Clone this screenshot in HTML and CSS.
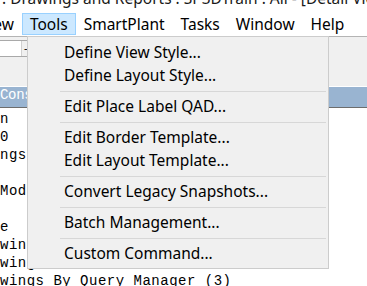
FILE: index.html
```html
<!DOCTYPE html>
<html lang="en">
  <head>
    <meta charset="UTF-8" />
    <title>Drawings and Reports : SP3DTrain : All</title>
    <link rel="stylesheet" href="styles.css">
  </head>
  <body>
    <div class="window">
      <div class="titlebar">
        <span class="title">: Drawings and Reports : SP3DTrain : All - [Detail View]</span>
      </div>

      <div class="menubar">
        <span class="menu-item first">View</span>
        <span class="menu-item active">Tools</span>
        <span class="menu-item">SmartPlant</span>
        <span class="menu-item">Tasks</span>
        <span class="menu-item">Window</span>
        <span class="menu-item">Help</span>
      </div>

      <div class="workspace">
        <div class="toolbar">
          <div class="combo">
            <span class="combo-text"></span>
            <span class="combo-btn">-</span>
          </div>
        </div>
        <div class="list-header">Cons</div>
        <ul class="tree">
          <li>n</li>
          <li>0</li>
          <li>ngs</li>
          <li>&nbsp;</li>
          <li>Mode</li>
          <li>&nbsp;</li>
          <li>e</li>
          <li>wing</li>
          <li>wing</li>
          <li>wings By Query Manager (3)</li>
        </ul>
      </div>

      <div class="dropdown">
        <div class="dd-item">Define View Style...</div>
        <div class="dd-item">Define Layout Style...</div>
        <div class="dd-sep"></div>
        <div class="dd-item">Edit Place Label QAD...</div>
        <div class="dd-sep"></div>
        <div class="dd-item">Edit Border Template...</div>
        <div class="dd-item">Edit Layout Template...</div>
        <div class="dd-sep"></div>
        <div class="dd-item">Convert Legacy Snapshots...</div>
        <div class="dd-sep"></div>
        <div class="dd-item">Batch Management...</div>
        <div class="dd-sep"></div>
        <div class="dd-item">Custom Command...</div>
      </div>
    </div>
  </body>
</html>
```

FILE: styles.css
```css
:root {
  --menu-bg: #f0f0f0;
  --menu-border: #cccccc;
  --sep-color: #d7d7d7;
  --hover-bg: #cce8ff;
  --hover-border: #99d1ff;
  --header-bg: #99b4d1;
  --text-color: #000;
}

* {
  box-sizing: border-box;
}

body {
  margin: 0;
  background: #fff;
  font-family: "Noto Sans", "Open Sans", sans-serif;
  color: var(--text-color);
  overflow: hidden;
}

.window {
  position: relative;
  width: 367px;
  height: 286px;
  overflow: hidden;
}

.titlebar {
  height: 12px;
  overflow: hidden;
  white-space: nowrap;
}

.title {
  display: block;
  margin-top: -12px;
  padding-left: 2px;
  font-size: 15.5px;
  line-height: 20px;
  color: #1a1a1a;
}

.menubar {
  display: flex;
  height: 24px;
  padding-top: 1px;
  white-space: nowrap;
}

.menu-item {
  height: 22px;
  padding: 0 7px;
  border: 1px solid transparent;
  font-size: 15.5px;
  line-height: 20px;
}

.menu-item.first {
  margin-left: -28px;
}

.menu-item.active {
  background: var(--hover-bg);
  border-color: var(--hover-border);
}

.workspace {
  border-top: 1px solid #b4b4b4;
}

.toolbar {
  height: 49px;
  padding-top: 3px;
  background: var(--menu-bg);
}

.combo {
  display: flex;
  width: 44px;
  height: 17px;
  background: #fff;
  border: 1px solid #a9a9a9;
  border-left: none;
}

.combo-text {
  width: 21px;
}

.combo-btn {
  flex: 1;
  padding-left: 2px;
  font-size: 11px;
  line-height: 14px;
  border-left: 1px solid #d0d0d0;
  background: #f0f0f0;
}

.list-header {
  height: 22px;
  background: var(--header-bg);
  border-top: 1px solid #fff;
  border-bottom: 1px solid #6d6d6d;
  color: #fff;
  font-family: "Liberation Mono", monospace;
  font-size: 14px;
  line-height: 16px;
  letter-spacing: -0.3px;
}

.tree {
  list-style: none;
  margin: 0;
  padding: 2px 0 0 0;
  font-family: "Liberation Mono", monospace;
  font-size: 14px;
  line-height: 18px;
  letter-spacing: 0.5px;
  white-space: nowrap;
}

.dropdown {
  position: absolute;
  left: 27px;
  top: 36px;
  width: 302px;
  padding: 4px 0 3px 0;
  background: var(--menu-bg);
  border: 1px solid var(--menu-border);
  font-size: 15.5px;
}

.dd-item {
  height: 23px;
  padding-left: 36px;
  line-height: 23px;
  white-space: nowrap;
}

.dd-sep {
  height: 1px;
  margin: 4px 2px 3px 32px;
  background: var(--sep-color);
}
```
